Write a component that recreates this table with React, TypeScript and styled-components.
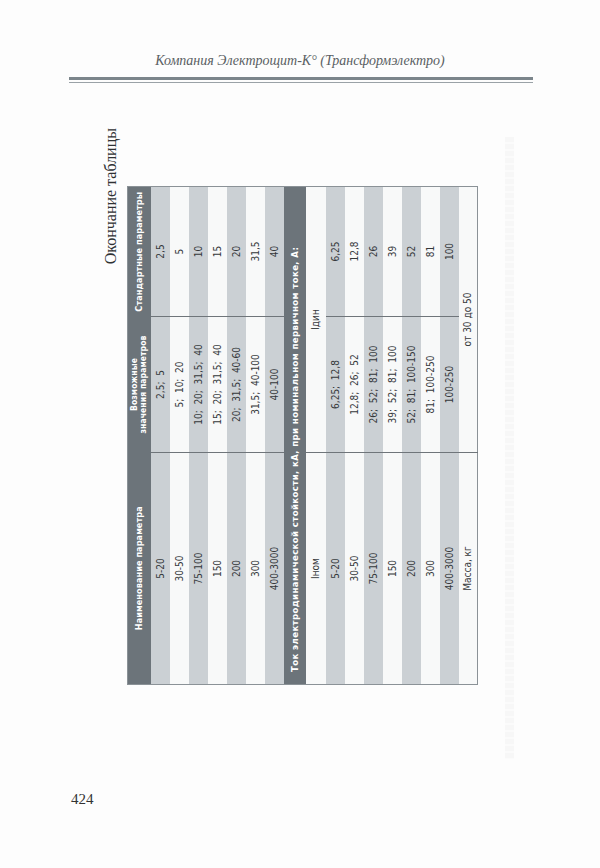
import React from 'react';
import styled, { createGlobalStyle } from 'styled-components';

const GlobalStyle = createGlobalStyle`
  html, body {
    margin: 0;
    padding: 0;
    background: #fdfdfd;
  }
`;

const Page = styled.div`
  width: 600px;
  height: 868px;
  overflow: hidden;
  display: flex;
  flex-direction: column;
  background: #fdfdfd;
  font-family: 'Liberation Serif', 'Times New Roman', serif;
  color: #333;
`;

const RunningHead = styled.div`
  margin-top: 51px;
  text-align: center;
  font-style: italic;
  font-size: 14px;
  line-height: 20px;
  color: #5a5f63;
`;

const Rule = styled.div`
  margin: 6px 0 0 69px;
  width: 464px;
  height: 2px;
  border-top: 3px solid #7b858b;
  border-bottom: 1px solid #9aa2a7;
`;

const Body = styled.div`
  display: flex;
  align-items: flex-start;
  height: 560px;
  margin-top: 42px;
`;

const Turned = styled.div`
  margin-left: 98px;
  width: 378px;
  height: 560px;
  flex-shrink: 0;
`;

const TurnedInner = styled.div`
  width: 560px;
  height: 378px;
  transform-origin: 0 0;
  transform: translateY(560px) rotate(-90deg);
`;

const Bleed = styled.div`
  margin: 12px 0 0 29px;
  width: 9px;
  height: 622px;
  flex-shrink: 0;
  background: repeating-linear-gradient(
    to bottom,
    #f7f7f7 0 5px,
    #fbfbfb 5px 7px
  );
`;

const Caption = styled.div`
  box-sizing: border-box;
  height: 29px;
  padding: 2px 3px 0 0;
  text-align: right;
  font-size: 16px;
  line-height: 22px;
  color: #2f3133;
`;

const Table = styled.table`
  width: 498px;
  border-collapse: collapse;
  table-layout: fixed;
  border: 1px solid #8b9297;
  font-family: 'Liberation Sans Narrow', 'DejaVu Sans Condensed', 'Liberation Sans', sans-serif;
  font-size: 10px;
  color: #35383b;
`;

const Row = styled.tr<{ $h: number; $tone?: 'dark' | 'gray' | 'white' }>`
  height: ${({ $h }) => $h}px;
  background: ${({ $tone }) =>
    $tone === 'dark' ? '#6c747a' : $tone === 'gray' ? '#cbd0d4' : '#f8f9f9'};
  color: ${({ $tone }) => ($tone === 'dark' ? '#ffffff' : 'inherit')};
`;

const Cell = styled.td<{ $rule?: boolean }>`
  padding: 0;
  text-align: center;
  vertical-align: middle;
  line-height: 11px;
  white-space: pre;
  border-right: ${({ $rule }) => ($rule ? '1px solid #6f757a' : 'none')};
`;

const HeadCell = styled.th<{ $two?: boolean }>`
  padding: 0;
  text-align: center;
  vertical-align: middle;
  font-weight: bold;
  font-size: ${({ $two }) => ($two ? '8.5px' : '9px')};
  line-height: ${({ $two }) => ($two ? '9px' : '11px')};
  letter-spacing: 0.1px;
  white-space: nowrap;
`;

const BandCell = styled.td`
  padding: 0 0 0 12px;
  text-align: left;
  font-weight: bold;
  font-size: 9.5px;
  letter-spacing: 0.4px;
  white-space: nowrap;
`;

const firstPart: [string, string, string][] = [
  ['5-20', '2,5;  5', '2,5'],
  ['30-50', '5;  10;  20', '5'],
  ['75-100', '10;  20;  31,5;  40', '10'],
  ['150', '15;  20;  31,5;  40', '15'],
  ['200', '20;  31,5;  40-60', '20'],
  ['300', '31,5;  40-100', '31,5'],
  ['400-3000', '40-100', '40'],
];

const secondPart: [string, string, string][] = [
  ['5-20', '6,25;  12,8', '6,25'],
  ['30-50', '12,8;  26;  52', '12,8'],
  ['75-100', '26;  52;  81;  100', '26'],
  ['150', '39;  52;  81;  100', '39'],
  ['200', '52;  81;  100-150', '52'],
  ['300', '81;  100-250', '81'],
  ['400-3000', '100-250', '100'],
];

const PageNumber = styled.div`
  margin: 104px 0 0 71px;
  font-size: 15px;
  line-height: 20px;
  color: #333;
`;

export default function App() {
  return (
    <Page>
      <GlobalStyle />
      <RunningHead>Компания Электрощит-К° (Трансформэлектро)</RunningHead>
      <Rule />
      <Body>
        <Turned>
          <TurnedInner>
            <Caption>Окончание таблицы</Caption>
            <Table>
              <colgroup>
                <col style={{ width: 232 }} />
                <col style={{ width: 136 }} />
                <col style={{ width: 130 }} />
              </colgroup>
              <tbody>
                <Row $h={23} $tone="dark">
                  <HeadCell>Наименование параметра</HeadCell>
                  <HeadCell $two>
                    Возможные
                    <br />
                    значения параметров
                  </HeadCell>
                  <HeadCell>Стандартные параметры</HeadCell>
                </Row>
                {firstPart.map(([name, values, standard], i) => (
                  <Row key={name} $h={19} $tone={i % 2 === 0 ? 'gray' : 'white'}>
                    <Cell $rule>{name}</Cell>
                    <Cell $rule>{values}</Cell>
                    <Cell>{standard}</Cell>
                  </Row>
                ))}
                <Row $h={22} $tone="dark">
                  <BandCell colSpan={3}>
                    Ток электродинамической стойкости, кА, при номинальном первичном токе, А:
                  </BandCell>
                </Row>
                <Row $h={20} $tone="white">
                  <Cell $rule>Iном</Cell>
                  <Cell colSpan={2}>Iдин</Cell>
                </Row>
                {secondPart.map(([name, values, standard], i) => (
                  <Row key={name} $h={19} $tone={i % 2 === 0 ? 'gray' : 'white'}>
                    <Cell $rule>{name}</Cell>
                    <Cell $rule>{values}</Cell>
                    <Cell>{standard}</Cell>
                  </Row>
                ))}
                <Row $h={19} $tone="white">
                  <Cell $rule>Масса, кг</Cell>
                  <Cell colSpan={2}>от 30 до 50</Cell>
                </Row>
              </tbody>
            </Table>
          </TurnedInner>
        </Turned>
        <Bleed />
      </Body>
      <PageNumber>424</PageNumber>
    </Page>
  );
}
